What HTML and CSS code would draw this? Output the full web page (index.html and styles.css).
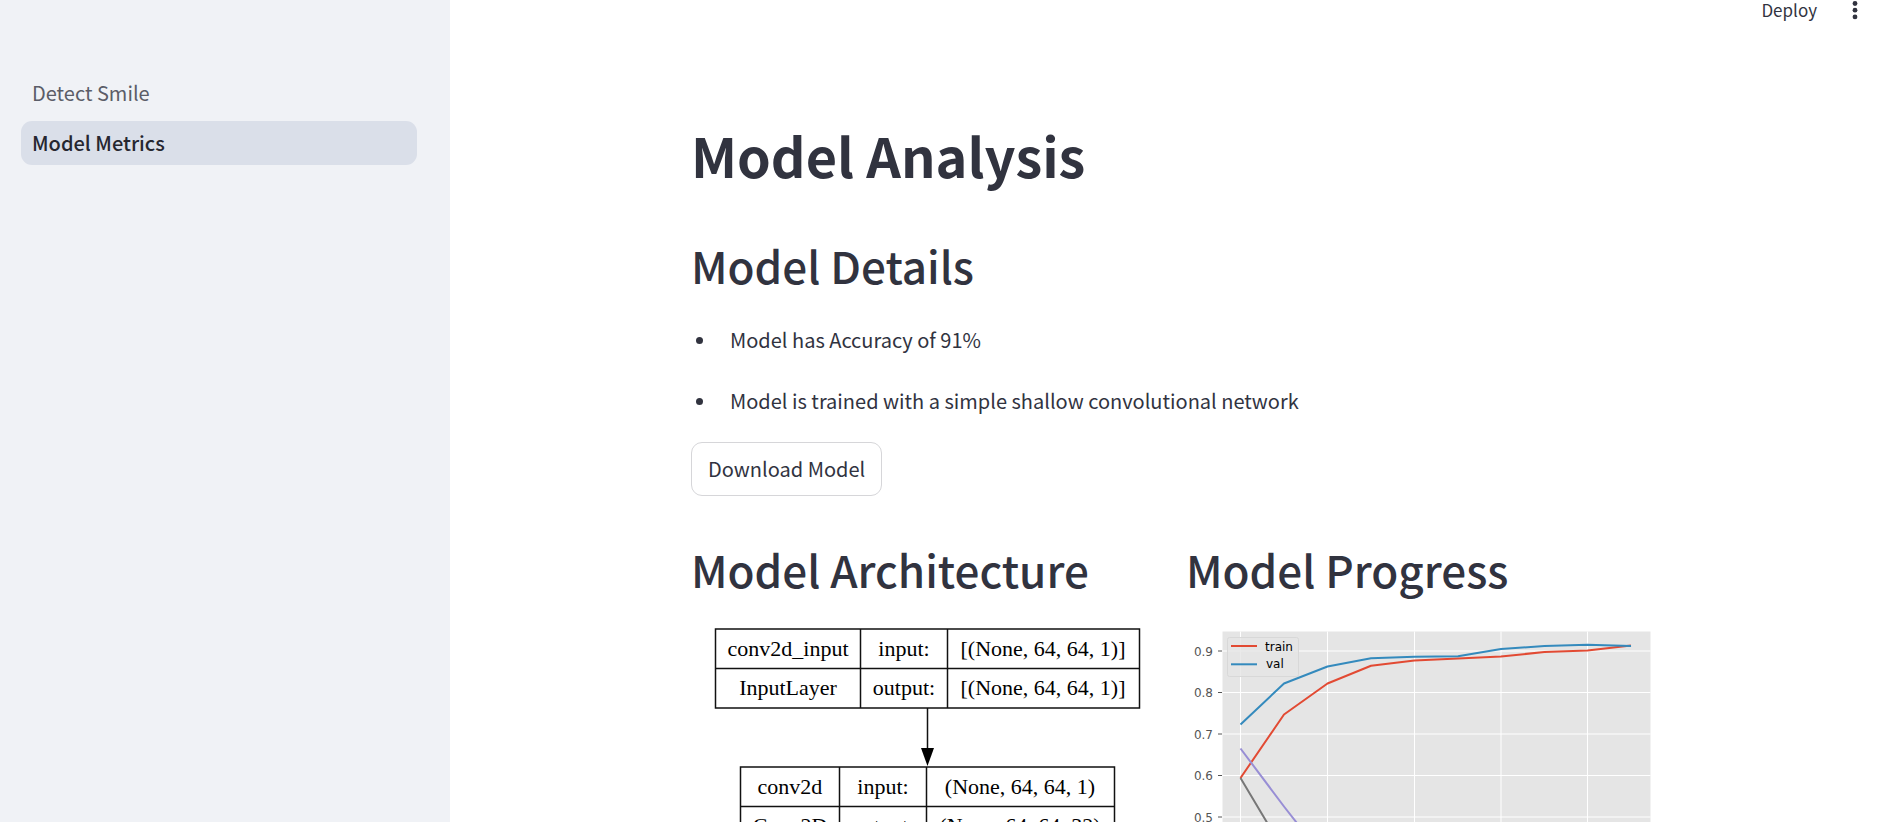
FILE: index.html
```html
<!DOCTYPE html>
<html lang="en">
<head>
<meta charset="utf-8">
<meta name="viewport" content="width=device-width, initial-scale=1">
<title>Model Metrics</title>
<link rel="stylesheet" href="styles.css">
</head>
<body>
<div class="app">
  <nav class="sidebar" aria-label="Pages">
    <a class="page-link" href="#detect">Detect Smile</a>
    <a class="page-link active" href="#metrics" aria-current="page">Model Metrics</a>
  </nav>
  <div class="view">
    <header class="toolbar">
      <button class="deploy" type="button">Deploy</button>
      <button class="menu" type="button" aria-label="Main menu">
        <svg width="6" height="20" viewBox="0 0 6 20"><circle cx="3" cy="3.5" r="2.4"/><circle cx="3" cy="10.2" r="2.4"/><circle cx="3" cy="16.9" r="2.4"/></svg>
      </button>
    </header>
    <main class="content">
      <h1>Model Analysis</h1>
      <h2>Model Details</h2>
      <ul class="facts">
        <li>Model has Accuracy of 91%</li>
        <li>Model is trained with a simple shallow convolutional network</li>
      </ul>
      <button class="download" type="button">Download Model</button>
      <div class="columns">
        <section>
          <h2>Model Architecture</h2>
          <svg class="figure" viewBox="0 0 473 240" role="img" aria-label="Layer diagram">
            <g class="boxes">
              <path d="M24.5 2H448.5V81H24.5ZM24.5 41.5H448.5M169.5 2V81M256.5 2V81"/>
              <path d="M49.5 140H423.5V219H49.5ZM49.5 179.5H423.5M148.5 140V219M235.5 140V219"/>
              <path d="M236.5 81V122M236.5 219V240"/>
            </g>
            <path d="M230 121H243L236.5 139Z"/>
            <g class="layer">
              <text x="97" y="29">conv2d_input</text><text x="213" y="29">input:</text>
              <text x="97" y="68">InputLayer</text><text x="213" y="68">output:</text>
              <text x="99" y="167">conv2d</text><text x="192" y="167">input:</text>
              <text x="99" y="206">Conv2D</text><text x="192" y="206">output:</text>
              <text x="352" y="29">[(None, 64, 64, 1)]</text>
              <text x="352" y="68">[(None, 64, 64, 1)]</text>
              <text x="329" y="167">(None, 64, 64, 1)</text>
              <text x="329" y="206">(None, 64, 64, 32)</text>
            </g>
          </svg>
        </section>
        <section>
          <h2>Model Progress</h2>
          <svg class="figure" viewBox="0 0 473 240" role="img" aria-label="Training and validation curves">
            <rect x="36.5" y="4.5" width="428" height="236" fill="#e5e5e5"/>
            <path class="grid" d="M54.5 4.5V240M141.5 4.5V240M228.5 4.5V240M315 4.5V240M401.5 4.5V240M36.5 24H464.5M36.5 65.5H464.5M36.5 107H464.5M36.5 148.5H464.5M36.5 190H464.5M36.5 231.5H464.5"/>
            <path class="ticks" d="M32 24H36M32 65.5H36M32 107H36M32 148.5H36M32 190H36M32 231.5H36"/>
            <g class="axis">
              <text x="27" y="29">0.9</text><text x="27" y="70">0.8</text><text x="27" y="112">0.7</text><text x="27" y="153">0.6</text><text x="27" y="195">0.5</text><text x="27" y="236">0.4</text>
            </g>
            <g class="curves">
              <path stroke="#e24a33" d="M54.5 151L98 87.5L141.5 56.5L185 38.8L228.5 33.5L272 31.5L315 29.5L358.5 25L401.5 23.5L445 18.5"/>
              <path stroke="#348abd" d="M54.5 97.5L98 56.5L141.5 39.5L185 31.3L228.5 29.8L272 29.3L315 22L358.5 19L401.5 17.8L445 19"/>
              <path stroke="#988ed5" d="M54.5 121.5L98 179.5L143 237"/>
              <path stroke="#777" d="M54.5 151L98 224L110 240"/>
            </g>
            <rect class="legend" x="41.5" y="10.5" width="71" height="39" rx="2"/>
            <g class="curves"><path stroke="#e24a33" d="M45 19H71"/><path stroke="#348abd" d="M45 37.3H71"/></g>
            <g class="legend-text"><text x="79" y="24">train</text><text x="80" y="41">val</text></g>
          </svg>
        </section>
      </div>
    </main>
  </div>
</div>
</body>
</html>
```
FILE: styles.css
```css
* { box-sizing: border-box; }

body {
  margin: 0;
  color: #31333f;
  background: #fff;
  font-family: "Noto Sans CJK SC", "Noto Sans", sans-serif;
  font-size: 20px;
  line-height: 36px;
}

button {
  font: inherit;
  color: inherit;
  background: none;
  border: 0;
  padding: 0;
  cursor: pointer;
}

.app {
  display: flex;
  height: 100vh;
}

.sidebar {
  flex: 0 0 450px;
  display: flex;
  flex-direction: column;
  gap: 6px;
  padding: 71px 33px 0 21px;
  background: #f0f2f6;
}

.page-link {
  padding: 0 11px;
  line-height: 44px;
  border-radius: 11px;
  color: #5b5d68;
  text-decoration: none;
}

.page-link.active {
  background: #dadfe9;
  color: #262730;
  font-weight: 500;
}

.view {
  flex: 1;
  min-width: 0;
  overflow-y: auto;
  scrollbar-width: none;
}

.toolbar {
  display: flex;
  justify-content: flex-end;
  align-items: center;
  gap: 35px;
  height: 20px;
  padding-right: 28px;
}

.deploy {
  font-size: 17px;
  line-height: 20px;
}

.menu {
  display: flex;
  fill: #31333f;
}

.content {
  width: 100%;
  max-width: 1032px;
  margin: 0 auto;
  padding: 102px 25px 0 39px;
}

h1, h2 { margin: 0; }

h1 {
  font-size: 54px;
  line-height: 66px;
  font-weight: 700;
  margin-bottom: 50px;
}

h2 {
  font-size: 44px;
  line-height: 54px;
  font-weight: 500;
  margin-bottom: 30px;
}

.facts {
  display: grid;
  gap: 25px;
  margin: 0 0 23px;
  padding: 0 0 0 5px;
  list-style: none;
}

.facts li {
  display: flex;
  align-items: center;
  gap: 27px;
}

.facts li::before {
  content: "";
  width: 7px;
  height: 7px;
  border-radius: 50%;
  background: currentColor;
}

.download {
  display: block;
  height: 54px;
  padding: 0 16px;
  border: 1px solid #d6d6d9;
  border-radius: 11px;
}

.columns {
  display: grid;
  grid-template-columns: 1fr 1fr;
  gap: 22px;
  margin-top: 46px;
}

.columns h2 { margin-bottom: 31px; }

.figure {
  display: block;
  width: 100%;
}

.boxes {
  fill: none;
  stroke: #111;
  stroke-width: 1.5;
}

.layer {
  font-family: "Liberation Serif", serif;
  font-size: 22px;
  text-anchor: middle;
  fill: #000;
}

.grid {
  fill: none;
  stroke: #fff;
}

.ticks { stroke: #555; }

.axis, .legend-text {
  font-family: "DejaVu Sans", sans-serif;
  font-size: 12px;
  fill: #555;
}

.axis { text-anchor: end; }

.legend-text { fill: #000; }

.curves {
  fill: none;
  stroke-width: 2;
  stroke-linejoin: round;
}

.legend {
  fill: #e5e5e5;
  fill-opacity: .8;
  stroke: #d8d8d8;
}
```
